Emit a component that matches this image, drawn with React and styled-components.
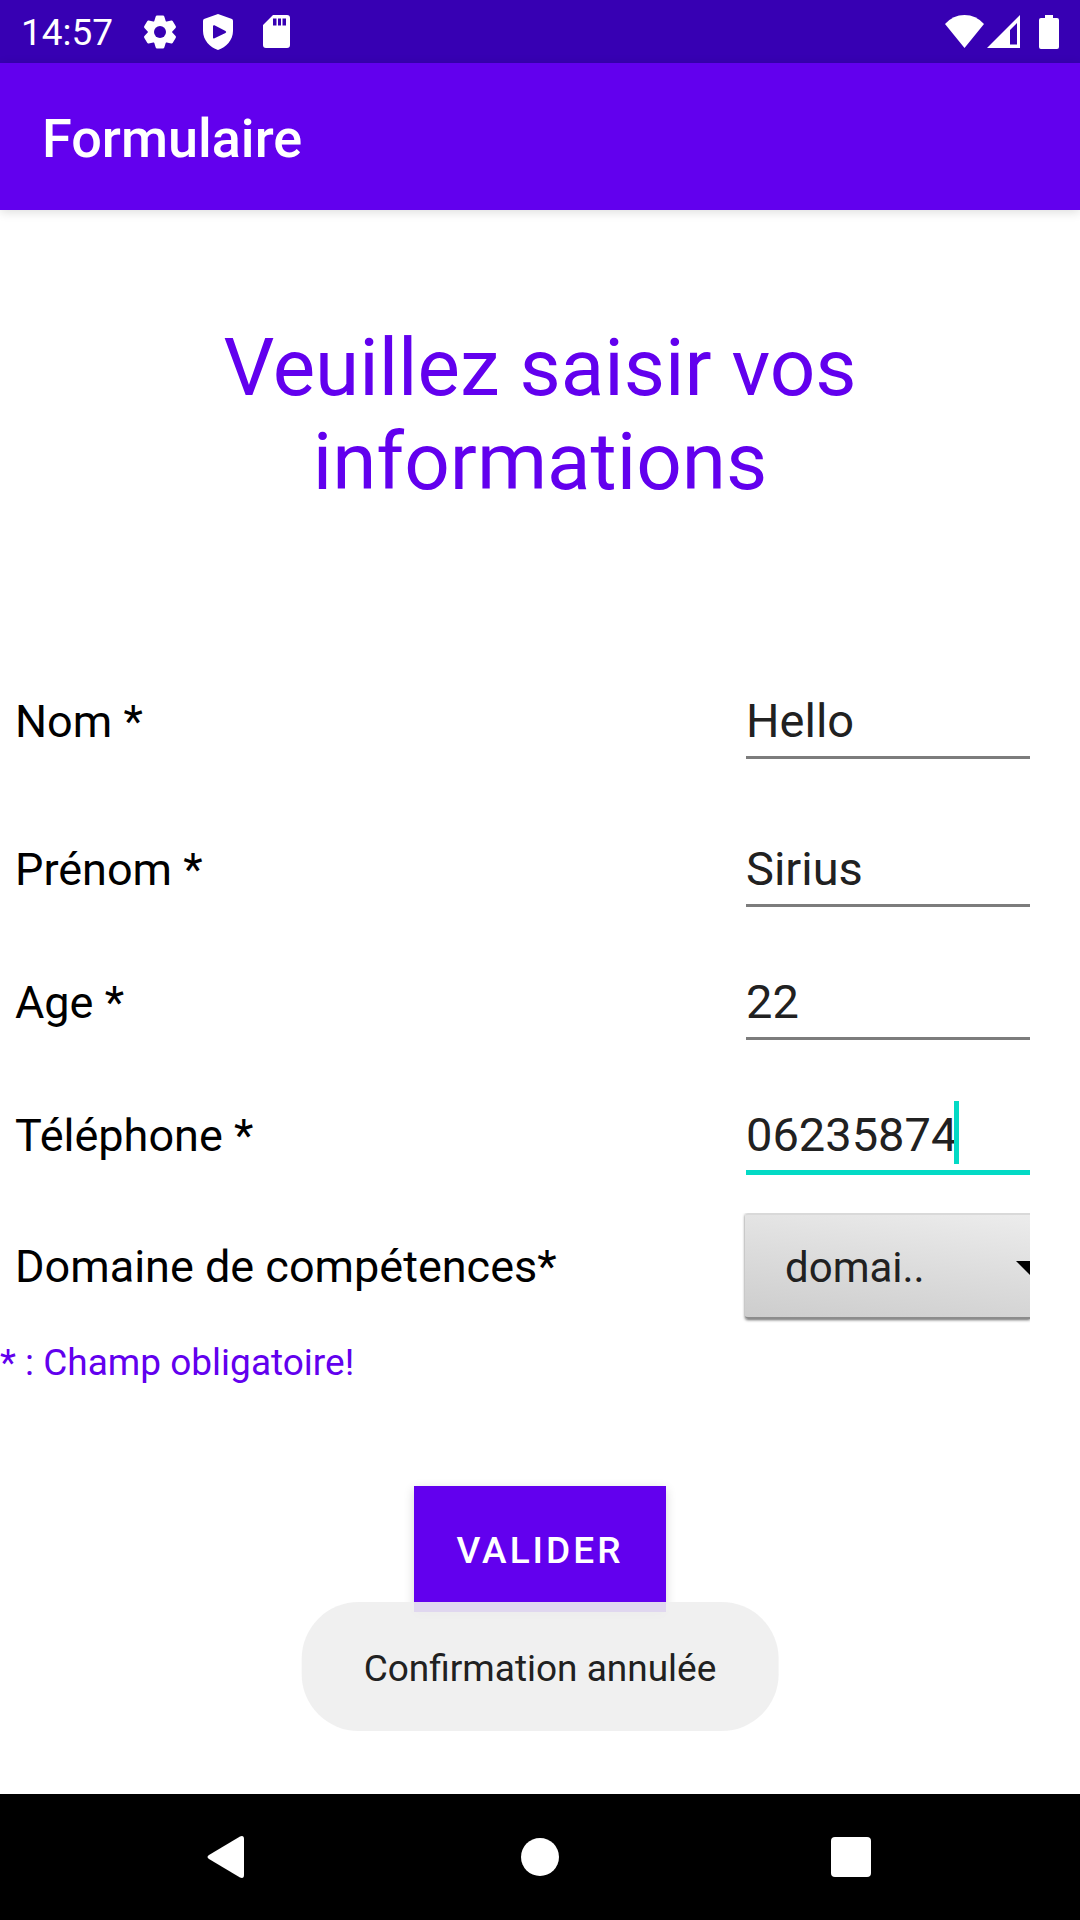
import React, { useState } from "react";
import styled, { createGlobalStyle } from "styled-components";

const PRIMARY = "#6200ee";
const PRIMARY_DARK = "#3700b3";
const ACCENT = "#03dac5";

const GlobalStyle = createGlobalStyle`
  *, *::before, *::after { box-sizing: border-box; }
  body {
    margin: 0;
    background: #fff;
    font-family: Roboto, "Noto Sans", sans-serif;
  }
`;

const Screen = styled.div`
  position: relative;
  display: flex;
  flex-direction: column;
  min-height: 100vh;
`;

const StatusBar = styled.div`
  display: flex;
  align-items: center;
  justify-content: space-between;
  height: 63px;
  padding: 0 21px;
  background: ${PRIMARY_DARK};
  color: #fff;
`;

const StatusGroup = styled.div`
  display: flex;
  align-items: center;
  gap: ${(p) => p.$gap}px;

  svg { display: block; }
`;

const Clock = styled.time`
  padding-top: 2px;
  font-size: 37px;
  line-height: 43px;
`;

const AppBar = styled.header`
  display: flex;
  align-items: center;
  height: 147px;
  padding: 0 42px;
  background: ${PRIMARY};
  color: #fff;
  box-shadow: 0 2px 10px rgba(0, 0, 0, 0.14);
`;

const AppTitle = styled.h1`
  margin: 0;
  padding-top: 4px;
  font-size: 54px;
  font-weight: 500;
  line-height: 62px;
`;

const Main = styled.main`
  flex: 1;
  padding-top: 111px;
`;

const Heading = styled.h2`
  margin: 0;
  padding: 0 50px;
  color: ${PRIMARY};
  font-size: 80px;
  font-weight: 400;
  line-height: 94px;
  text-align: center;
`;

const Form = styled.form`
  display: flex;
  flex-direction: column;
  margin-top: 184px;
`;

const Row = styled.div`
  display: grid;
  grid-template-columns: 1fr 288px;
  align-items: baseline;
  margin-top: ${(p) => p.$space || 0}px;
  padding: 0 50px 0 15px;
`;

const Label = styled.label`
  color: #000;
  font-size: 45px;
  line-height: 53px;
`;

const Field = styled.div`
  position: relative;
  display: flex;
  margin-left: 4px;
  font-size: 47px;
`;

const TextInput = styled.input`
  width: 100%;
  min-width: 0;
  height: ${(p) => (p.$active ? 68 : 66)}px;
  padding: 0 0 8px;
  border: 0;
  border-bottom: ${(p) => (p.$active ? `5px solid ${ACCENT}` : "3px solid #7c7c7c")};
  border-radius: 0;
  outline: 0;
  background: transparent;
  color: #212121;
  caret-color: ${ACCENT};
  font: inherit;
  line-height: 55px;
`;

const Caret = styled.span`
  position: absolute;
  top: -6px;
  left: calc(8ch - 3px);
  width: 5px;
  height: 63px;
  background: ${ACCENT};
`;

const SpinnerClip = styled.div`
  position: relative;
  height: 112px;
  margin-bottom: -6px;
  padding-left: 3px;
  overflow: hidden;
`;

const Spinner = styled.select`
  width: 100%;
  height: 106px;
  padding: 3px 60px 0 40px;
  border: 0;
  border-top: 2px solid #d9d9d9;
  border-bottom: 2px solid #8c8c8c;
  border-radius: 3px 0 0 3px;
  outline: 0;
  appearance: none;
  background: linear-gradient(187deg, #ececec 0%, #dcdcdc 50%, #cdcdcd 100%);
  box-shadow: 0 1px 3px rgba(0, 0, 0, 0.6);
  color: #212121;
  font-family: inherit;
  font-size: 42px;
  line-height: 49px;
`;

const SpinnerArrow = styled.svg`
  position: absolute;
  top: 48px;
  right: -14px;
  pointer-events: none;
`;

const Hint = styled.p`
  margin: 22px 0 0;
  color: ${PRIMARY};
  font-size: 37px;
  line-height: 43px;
`;

const SubmitButton = styled.button`
  align-self: center;
  height: 126px;
  margin-top: 102px;
  padding: 2px 43px 0;
  border: 0;
  background: ${PRIMARY};
  box-shadow: 0 3px 10px rgba(0, 0, 0, 0.16);
  color: #fff;
  font-family: inherit;
  font-size: 37px;
  font-weight: 500;
  letter-spacing: 3px;
  text-transform: uppercase;
`;

const Toast = styled.div`
  position: absolute;
  bottom: 189px;
  left: 50%;
  padding: 45px 62px 41px;
  border-radius: 57px;
  background: rgba(238, 238, 238, 0.9);
  color: #212121;
  font-size: 37px;
  line-height: 43px;
  white-space: nowrap;
  transform: translateX(-50%);
`;

const NavBar = styled.nav`
  display: flex;
  align-items: center;
  justify-content: center;
  gap: 185px;
  height: 126px;
  background: #000;
`;

const NavButton = styled.button`
  display: grid;
  place-items: center;
  width: 126px;
  height: 126px;
  padding: 0;
  border: 0;
  background: transparent;

  svg { display: block; }
`;

const TOOTH = "M-3 -16.500H3Q4 -16.500 4.300 -15.500L6 -10V10L4.300 15.500Q4 16.500 3 16.500H-3Q-4 16.500 -4.300 15.500L-6 10V-10L-4.300 -15.500Q-4 -16.500 -3 -16.500Z";

const GearIcon = () => (
  <svg width="34" height="34" viewBox="-17 -17 34 34" fill="#fff" aria-hidden="true">
    <circle r="12" />
    {[0, 60, 120].map((angle) => (
      <path key={angle} d={TOOTH} transform={`rotate(${angle})`} />
    ))}
    <circle r="6" fill={PRIMARY_DARK} />
  </svg>
);

const ShieldIcon = () => (
  <svg width="30" height="36" viewBox="0 0 30 36" fill="#fff" aria-hidden="true">
    <path
      fillRule="evenodd"
      d="M15 0 29 5Q30 5.500 30 7V17C30 26 23 33.500 15 36C7 33.500 0 26 0 17V7Q0 5.500 1 5ZM10 12.500V23.500Q10 25 11.500 24.300L22.500 19Q24 18 22.500 17L11.500 11.300Q10 10.800 10 12.500Z"
    />
  </svg>
);

const SdCardIcon = () => (
  <svg width="27" height="33" viewBox="0 0 27 33" fill="#fff" aria-hidden="true">
    <path
      fillRule="evenodd"
      d="M10 0H24Q27 0 27 3V30Q27 33 24 33H3Q0 33 0 30V10ZM10 3.500V10.500H13.500V3.500ZM15 3.500V10.500H18V3.500ZM19.500 3.500V10.500H23V3.500Z"
    />
  </svg>
);

const WifiIcon = () => (
  <svg width="39" height="33" viewBox="0 0 39 33" fill="#fff" aria-hidden="true">
    <path d="M19.500 33 0 9Q8 0 19.500 0T39 9Z" />
  </svg>
);

const SignalIcon = () => (
  <svg width="33" height="33" viewBox="0 0 33 33" fill="#fff" aria-hidden="true">
    <path fillRule="evenodd" d="M33 0V33H0ZM30 8 23 15V29.500H30Z" />
  </svg>
);

const BatteryIcon = () => (
  <svg width="20" height="34" viewBox="0 0 20 34" fill="#fff" aria-hidden="true">
    <path d="M6 0H14V3H18Q20 3 20 5V32Q20 34 18 34H2Q0 34 0 32V5Q0 3 2 3H6Z" />
  </svg>
);

const FIELDS = [
  { id: "nom", label: "Nom *", value: "Hello", space: 0 },
  { id: "prenom", label: "Prénom *", value: "Sirius", space: 82 },
  { id: "age", label: "Age *", value: "22", space: 67 },
  { id: "telephone", label: "Téléphone *", value: "06235874", space: 67, active: true },
];

function TextRow({ id, label, value, space, active }) {
  const [text, setText] = useState(value);
  return (
    <Row $space={space}>
      <Label htmlFor={id}>{label}</Label>
      <Field>
        <TextInput
          id={id}
          type="text"
          value={text}
          $active={active}
          onChange={(e) => setText(e.target.value)}
        />
        {active && <Caret />}
      </Field>
    </Row>
  );
}

export default function App() {
  return (
    <>
      <GlobalStyle />
      <Screen>
        <StatusBar>
          <StatusGroup $gap={30}>
            <Clock>14:57</Clock>
            <StatusGroup $gap={26}>
              <GearIcon />
              <ShieldIcon />
            </StatusGroup>
            <SdCardIcon />
          </StatusGroup>
          <StatusGroup $gap={3}>
            <WifiIcon />
            <StatusGroup $gap={19}>
              <SignalIcon />
              <BatteryIcon />
            </StatusGroup>
          </StatusGroup>
        </StatusBar>

        <AppBar>
          <AppTitle>Formulaire</AppTitle>
        </AppBar>

        <Main>
          <Heading>Veuillez saisir vos informations</Heading>
          <Form onSubmit={(e) => e.preventDefault()}>
            {FIELDS.map((field) => (
              <TextRow key={field.id} {...field} />
            ))}
            <Row $space={38}>
              <Label htmlFor="domaine">Domaine de compétences*</Label>
              <SpinnerClip>
                <Spinner id="domaine" defaultValue="domaine">
                  <option value="domaine">domai..</option>
                </Spinner>
                <SpinnerArrow width="28" height="14" viewBox="0 0 28 14" aria-hidden="true">
                  <path d="M0 0H28L14 14Z" fill="#000" />
                </SpinnerArrow>
              </SpinnerClip>
            </Row>
            <Hint>* : Champ obligatoire!</Hint>
            <SubmitButton type="submit">Valider</SubmitButton>
          </Form>
        </Main>

        <NavBar>
          <NavButton type="button" aria-label="Retour">
            <svg width="44" height="44" viewBox="0 0 44 44" fill="#fff" aria-hidden="true">
              <path d="M2 20 33 1.500Q37 0 37 4V40Q37 44 33 42.500L2 24Q-1 22 2 20Z" />
            </svg>
          </NavButton>
          <NavButton type="button" aria-label="Accueil">
            <svg width="38" height="38" viewBox="0 0 38 38" fill="#fff" aria-hidden="true">
              <circle cx="19" cy="19" r="19" />
            </svg>
          </NavButton>
          <NavButton type="button" aria-label="Applications récentes">
            <svg width="40" height="40" viewBox="0 0 40 40" fill="#fff" aria-hidden="true">
              <rect width="40" height="40" rx="4" />
            </svg>
          </NavButton>
        </NavBar>

        <Toast role="status">Confirmation annulée</Toast>
      </Screen>
    </>
  );
}
